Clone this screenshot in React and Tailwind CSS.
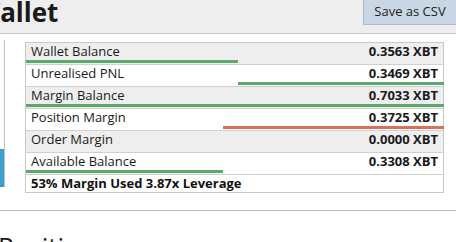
export default function App() {
  const rows = [
    { label: "Wallet Balance", value: "0.3563 XBT", bg: "bg-[#eeeeee]", bar: { left: 0, width: 212, color: "bg-[#5aaa6c]" } },
    { label: "Unrealised PNL", value: "0.3469 XBT", bg: "bg-white", bar: { left: 212, width: 206, color: "bg-[#5aaa6c]" } },
    { label: "Margin Balance", value: "0.7033 XBT", bg: "bg-[#eeeeee]", bar: { left: 0, width: 418, color: "bg-[#5aaa6c]" } },
    { label: "Position Margin", value: "0.3725 XBT", bg: "bg-white", bar: { left: 197, width: 221, color: "bg-[#d9705a]" } },
    { label: "Order Margin", value: "0.0000 XBT", bg: "bg-[#eeeeee]", bar: null },
    { label: "Available Balance", value: "0.3308 XBT", bg: "bg-white", bar: { left: 0, width: 197, color: "bg-[#5aaa6c]" } },
  ];
  return (
    <div className="w-[456px] h-[242px] overflow-hidden bg-white text-[#222]" style={{ fontFamily: '"Open Sans", "Noto Sans", sans-serif' }}>
      <div className="h-[34px] bg-[#eeeeee] border-b border-[#c4c4c4] flex justify-between items-start overflow-hidden">
        <div className="ml-[-25px] text-[26px] font-bold leading-[26px] mt-[-1px] text-[#1a1a1a]">Wallet</div>
        <div className="w-[93px] h-[25px] bg-[#c9d7e4] border-l border-b border-[#aebccb] flex items-center justify-center text-[13px] text-[#222]">Save as CSV</div>
      </div>
      <div className="flex mt-[6px]">
        <div className="w-[5px] h-[147px] border-r border-[#c4c4c4] flex flex-col justify-end">
          <div className="h-[38px] w-[4px] bg-[#3a9fcf]" />
        </div>
        <div className="ml-[20px] w-[419px] border border-[#c8c8c8] mt-[2px]">
          {rows.map((r) => (
            <div key={r.label} className={`relative h-[22px] ${r.bg} border-b border-[#d0d0d0] flex items-center justify-between px-[5px] text-[13px]`}>
              <span className="text-[#1a1a1a] mt-[-3px]">{r.label}</span>
              <span className="font-bold text-[#1a1a1a] mt-[-3px]">{r.value}</span>
              {r.bar && (
                <div className={`absolute bottom-[1px] h-[3px] ${r.bar.color}`} style={{ left: r.bar.left, width: r.bar.width }} />
              )}
            </div>
          ))}
          <div className="h-[17px] flex items-center px-[5px] text-[13px] font-bold text-[#111]">53% Margin Used 3.87x Leverage</div>
        </div>
      </div>
      <div className="mt-[17px] border-t border-[#bdbdbd]" />
      <div className="mt-[20px] ml-[-2px] text-[26px] leading-[30px] text-[#1a1a1a]">Positions</div>
    </div>
  );
}
